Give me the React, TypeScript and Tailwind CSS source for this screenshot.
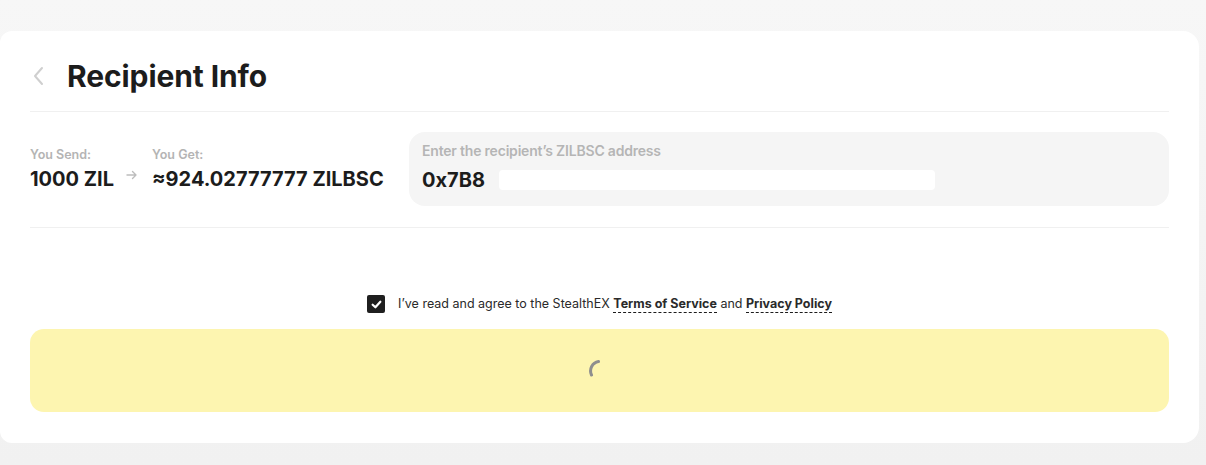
import React from "react";

function Spinner() {
  return (
    <svg className="w-6 h-6" viewBox="0 0 24 24" fill="none">
      <path d="M3.5 16 A9.5 9.5 0 0 1 10.5 2.6" stroke="#8e8e8e" strokeWidth="3" strokeLinecap="round" />
    </svg>
  );
}

export default function App() {
  return (
    <div
      className="min-h-[465px] w-[1206px] bg-gradient-to-b from-[#f7f7f7] to-[#f1f1f1] pt-[31px] text-[#1c1c1c]"
      style={{ fontFamily: "Inter, 'Noto Sans', sans-serif" }}
    >
      <div className="w-[1199px] h-[412px] bg-white rounded-r-2xl rounded-l-xl px-[30px]">
        {/* Header */}
        <div className="h-[81px] pt-[10px] flex items-center border-b border-[#f0f0f0]">
          <svg className="w-[14px] h-[20px] ml-[2px]" viewBox="0 0 14 20" fill="none">
            <path d="M10 2 L3 10 L10 18" stroke="#cfcfcf" strokeWidth="2" strokeLinecap="round" strokeLinejoin="round" />
          </svg>
          <h1 className="ml-[21px] text-[30px] font-bold tracking-[-0.1px] leading-none">Recipient Info</h1>
        </div>

        {/* Summary + address */}
        <div className="flex items-center pt-[20px] pb-[21px] border-b border-[#f0f0f0]">
          <div className="w-[379px] flex items-start">
            <div className="flex flex-col">
              <span className="text-[12.5px] font-semibold text-[#b4b4b4] leading-4">You Send:</span>
              <span className="mt-[4px] text-[20px] font-bold leading-6">1000 ZIL</span>
            </div>
            <svg className="w-3 h-3 ml-[12px] mt-[22px]" viewBox="0 0 12 12" fill="none">
              <path d="M1 6 H10 M6.5 2.5 L10 6 L6.5 9.5" stroke="#bdbdbd" strokeWidth="1.4" strokeLinecap="round" strokeLinejoin="round" />
            </svg>
            <div className="flex flex-col ml-[14px]">
              <span className="text-[12.5px] font-semibold text-[#b4b4b4] leading-4">You Get:</span>
              <span className="mt-[4px] text-[20px] font-bold leading-6">≈924.02777777 ZILBSC</span>
            </div>
          </div>
          <div className="flex-1 h-[74px] bg-[#f5f5f5] rounded-2xl px-[13px] pt-[11px]">
            <div className="text-[14px] font-semibold text-[#b5b5b5] leading-4 tracking-[-0.2px]">
              Enter the recipient’s ZILBSC address
            </div>
            <div className="mt-[9px] flex items-center text-[20px] font-bold leading-6">
              <span>0x7B8</span>
              <span className="ml-[14px] h-[20px] w-[436px] bg-white rounded-sm" />
            </div>
          </div>
        </div>

        {/* Terms */}
        <div className="mt-[67px] flex items-center justify-center gap-[13px] h-[18px]">
          <span className="w-[18px] h-[18px] bg-[#1f1f1f] rounded-[2px] flex items-center justify-center">
            <svg className="w-[11px] h-[11px]" viewBox="0 0 10 10" fill="none">
              <path d="M1.5 5.2 L4 7.5 L8.5 2.5" stroke="white" strokeWidth="2" strokeLinecap="round" strokeLinejoin="round" />
            </svg>
          </span>
          <p className="text-[12.5px] text-[#2a2a2a] leading-none pt-[1px]">
            I’ve read and agree to the StealthEX{" "}
            <span className="font-bold border-b border-dashed border-[#1c1c1c] pb-[1px]">Terms of Service</span> and{" "}
            <span className="font-bold border-b border-dashed border-[#1c1c1c] pb-[1px]">Privacy Policy</span>
          </p>
        </div>

        {/* Submit */}
        <button className="mt-4 w-full h-[83px] rounded-[14px] bg-[#fdf5b0] flex items-center justify-center">
          <Spinner />
        </button>
      </div>
    </div>
  );
}
